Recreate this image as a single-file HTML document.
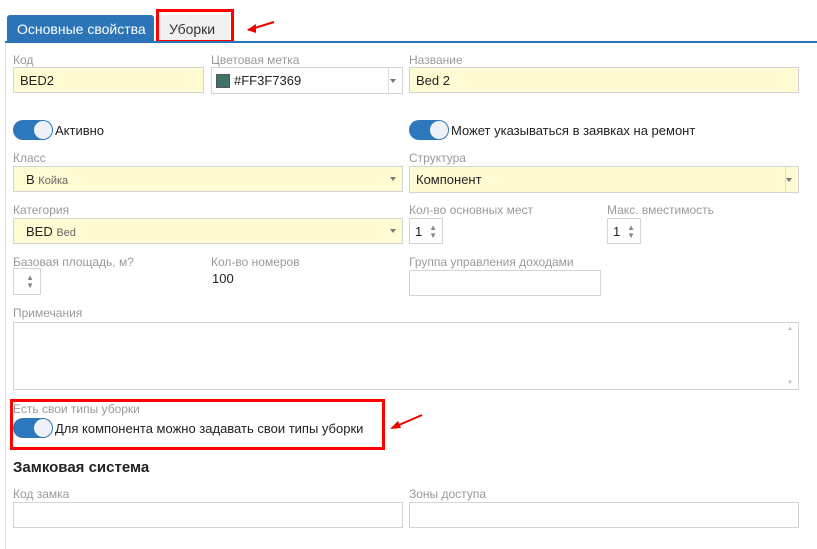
<!DOCTYPE html>
<html><head><meta charset="utf-8"><style>
*{box-sizing:border-box;margin:0;padding:0}
body{width:817px;height:549px;background:#fff;font-family:"Liberation Sans","DejaVu Sans",sans-serif;position:relative;overflow:hidden;color:#222}
.a{position:absolute}
.lb{position:absolute;font-size:12px;color:#9a9a9a;white-space:nowrap}
.in{position:absolute;border:1px solid #d4d4d4;background:#fff;font-size:13px;padding-left:6px;display:flex;align-items:center}
.y{background:#fffbd2}
.dd{position:absolute;right:6px;top:50%;margin-top:-2px;border-left:3px solid transparent;border-right:3px solid transparent;border-top:4px solid #777}
.tg{position:absolute;width:40px;height:20px;border-radius:10px;background:#2d77bd}
.tg:after{content:"";position:absolute;right:1px;top:1px;width:18px;height:18px;border-radius:50%;background:#eef2f8}
.tx{position:absolute;font-size:13px;white-space:nowrap}
.sp{position:absolute;right:5px;font-size:8px;color:#888;line-height:8px}
.sm{font-size:11px;color:#666}
</style></head><body>
<div class="a" style="left:5px;top:42px;width:1px;height:507px;background:#e4e4e4"></div>
<div class="a" style="left:7px;top:15px;width:147px;height:27px;background:#2b74b8;color:#fff;font-size:14px;padding:6px 0 0 10px;border-radius:3px 3px 0 0">Основные свойства</div>
<div class="a" style="left:158px;top:15px;width:72px;height:27px;background:#f0f0f0;color:#333;font-size:14px;padding:6px 0 0 11px">Уборки</div>
<div class="a" style="left:156px;top:9px;width:78px;height:34px;border:3px solid #f00"></div>
<div class="a" style="left:5px;top:41px;width:812px;height:2px;background:#2b74b8"></div>
<svg class="a" style="left:246px;top:18px" width="30" height="16"><path d="M2 12 L28 4" stroke="#e00" stroke-width="2"/><path d="M1 12 L10 6 L10 15 Z" fill="#e00"/></svg>

<div class="lb" style="left:13px;top:53px">Код</div>
<div class="in y" style="left:13px;top:67px;width:191px;height:26px">BED2</div>
<div class="lb" style="left:211px;top:53px">Цветовая метка</div>
<div class="in" style="left:211px;top:67px;width:192px;height:27px;padding-left:4px"><span style="display:inline-block;width:14px;height:14px;background:#3f7369;border:1px solid #555;margin-right:4px"></span>#FF3F7369<div style="position:absolute;left:176px;top:0;width:1px;height:25px;background:#ddd"></div><div class="dd"></div></div>
<div class="lb" style="left:409px;top:53px">Название</div>
<div class="in y" style="left:409px;top:67px;width:390px;height:26px">Bed 2</div>

<div class="tg" style="left:13px;top:120px"></div><div class="tx" style="left:55px;top:123px">Активно</div>
<div class="tg" style="left:409px;top:120px"></div><div class="tx" style="left:451px;top:123px">Может указываться в заявках на ремонт</div>

<div class="lb" style="left:13px;top:151px">Класс</div>
<div class="in y" style="left:13px;top:166px;width:390px;height:26px;padding-left:12px"><span>B <span class="sm">Койка</span></span><div class="dd"></div></div>
<div class="lb" style="left:409px;top:151px">Структура</div>
<div class="in y" style="left:409px;top:166px;width:390px;height:27px">Компонент<div style="position:absolute;left:375px;top:0;width:1px;height:25px;background:#ddd"></div><div class="dd"></div></div>

<div class="lb" style="left:13px;top:203px">Категория</div>
<div class="in y" style="left:13px;top:218px;width:390px;height:26px;padding-left:12px"><span>BED <span class="sm">Bed</span></span><div class="dd"></div></div>
<div class="lb" style="left:409px;top:203px">Кол-во основных мест</div>
<div class="in" style="left:409px;top:218px;width:34px;height:26px;padding-left:5px">1<span class="sp" style="top:5px">▲<br>▼</span></div>
<div class="lb" style="left:607px;top:203px">Макс. вместимость</div>
<div class="in" style="left:607px;top:218px;width:34px;height:26px;padding-left:5px">1<span class="sp" style="top:5px">▲<br>▼</span></div>

<div class="lb" style="left:13px;top:255px">Базовая площадь, м?</div>
<div class="in" style="left:13px;top:268px;width:28px;height:27px"><span class="sp" style="top:5px;right:6px">▲<br>▼</span></div>
<div class="lb" style="left:211px;top:255px">Кол-во номеров</div>
<div class="tx" style="left:212px;top:271px">100</div>
<div class="lb" style="left:409px;top:255px">Группа управления доходами</div>
<div class="in" style="left:409px;top:270px;width:192px;height:26px"></div>

<div class="lb" style="left:13px;top:306px">Примечания</div>
<div class="in" style="left:13px;top:322px;width:786px;height:68px"><span style="position:absolute;right:5px;top:3px;font-size:6px;color:#bbb">▲</span><span style="position:absolute;right:5px;bottom:3px;font-size:6px;color:#bbb">▼</span></div>

<div class="a" style="left:10px;top:399px;width:375px;height:51px;border:3px solid #f00"></div>
<div class="lb" style="left:13px;top:402px">Есть свои типы уборки</div>
<div class="tg" style="left:13px;top:418px"></div><div class="tx" style="left:55px;top:421px">Для компонента можно задавать свои типы уборки</div>
<svg class="a" style="left:388px;top:412px" width="36" height="20"><path d="M4 16 L34 3" stroke="#e00" stroke-width="2"/><path d="M2 17 L10 9 L13 16 Z" fill="#e00"/></svg>

<div class="a" style="left:13px;top:459px;font-size:15px;font-weight:bold;color:#222">Замковая система</div>
<div class="lb" style="left:13px;top:487px">Код замка</div>
<div class="in" style="left:13px;top:502px;width:390px;height:26px"></div>
<div class="lb" style="left:409px;top:487px">Зоны доступа</div>
<div class="in" style="left:409px;top:502px;width:390px;height:26px"></div>
</body></html>
